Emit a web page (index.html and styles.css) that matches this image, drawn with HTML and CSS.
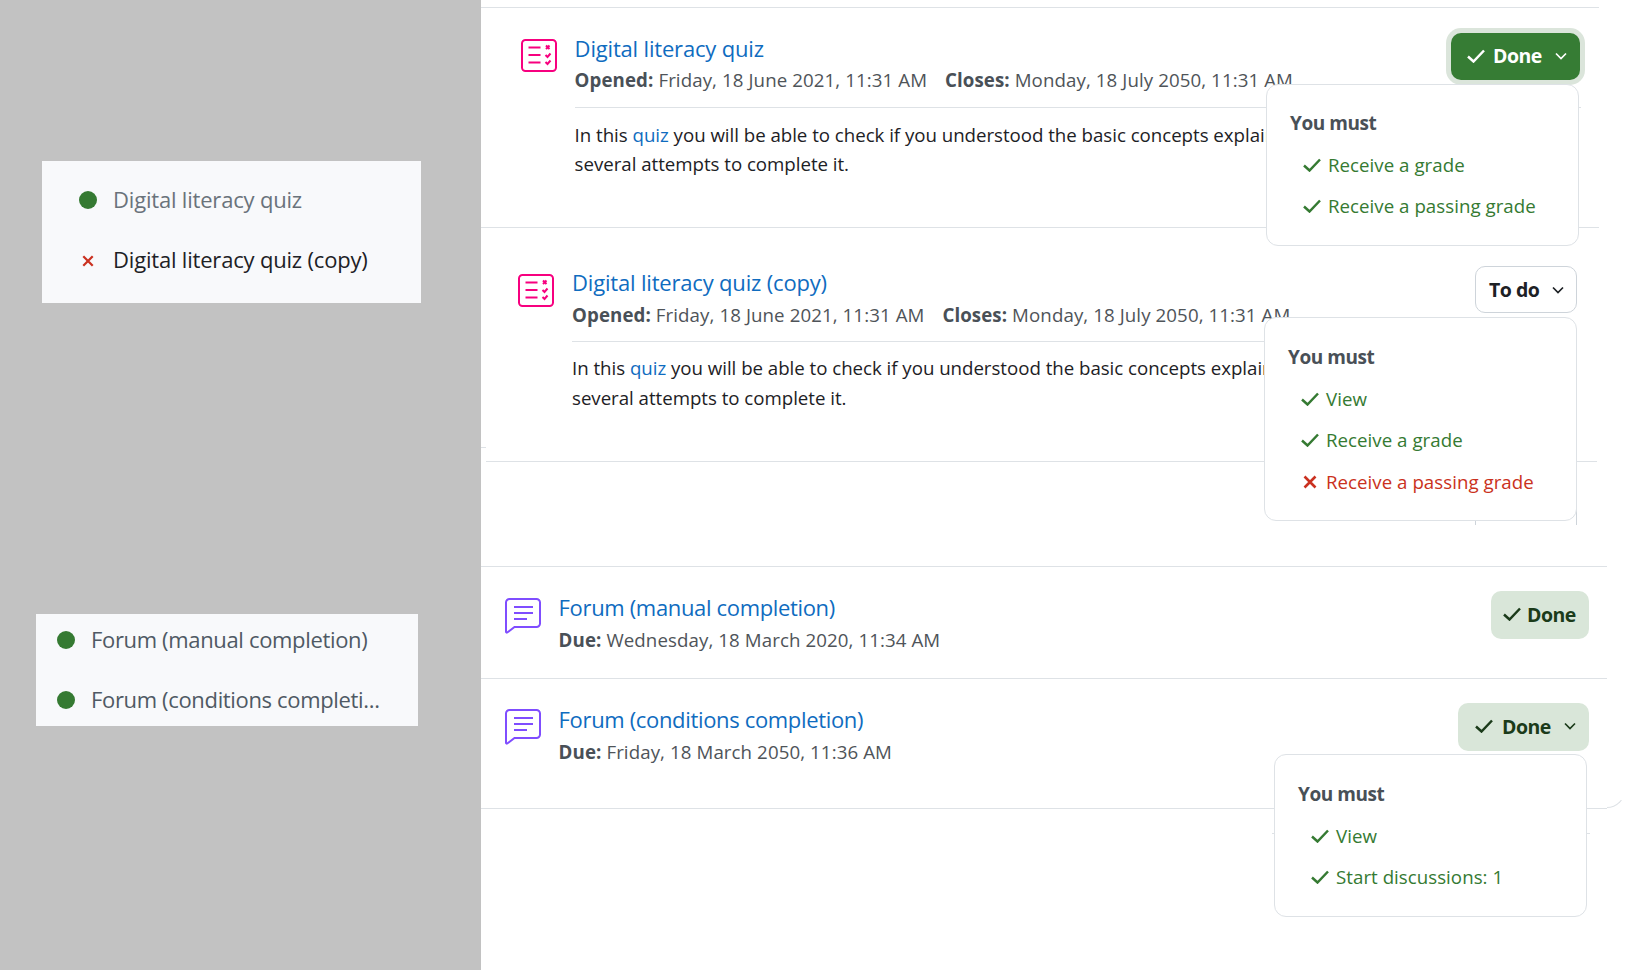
FILE: index.html
```html
<!DOCTYPE html>
<html lang="en">
<head>
<meta charset="utf-8">
<title>Activity completion</title>
<link rel="stylesheet" href="styles.css">
</head>
<body>
<svg class="defs" width="0" height="0" aria-hidden="true">
  <symbol id="i-quiz" viewBox="0 0 36 33">
    <rect x="1" y="1" width="34" height="31" rx="3.5" fill="none" stroke="#f7007f" stroke-width="2"/>
    <path d="M7.5 8.5h12M7.5 16h12M7.5 23.5h12" fill="none" stroke="#f7007f" stroke-width="2"/>
    <path d="M25 6.5l3.5 3.5M28.5 6.5L25 10M24.5 16l2 2 3-3.5M24.5 23l2 2 3-3.5" fill="none" stroke="#f7007f" stroke-width="2"/>
  </symbol>
  <symbol id="i-forum" viewBox="0 0 36 36">
    <path d="M1 4.500a3.500 3.500 0 0 1 3.500-3.500h27a3.500 3.500 0 0 1 3.500 3.500v21a3.500 3.500 0 0 1-3.500 3.500H9.500L2.200 34.500a.8.800 0 0 1-1.200-.7z" fill="none" stroke="#7f4dff" stroke-width="2"/>
    <path d="M9 9h19M9 15h19M9 21h13" fill="none" stroke="#7f4dff" stroke-width="2"/>
  </symbol>
  <symbol id="i-check" viewBox="0 0 18 14">
    <path d="M1 7.500l5.500 5L17 1.500" fill="none" stroke="currentColor" stroke-width="2.500"/>
  </symbol>
  <symbol id="i-cross" viewBox="0 0 14 14">
    <path d="M1.500 1.500l11 11M12.500 1.500l-11 11" fill="none" stroke="currentColor" stroke-width="2.600"/>
  </symbol>
  <symbol id="i-caret" viewBox="0 0 12 8">
    <path d="M1 1.500l5 5 5-5" fill="none" stroke="currentColor" stroke-width="1.700"/>
  </symbol>
</svg>

<div class="page">
  <aside class="side">
    <ul class="index index-quiz">
      <li class="index-row is-muted"><span class="dot"></span><span class="index-text">Digital literacy quiz</span></li>
      <li class="index-row is-dark"><span class="cross-slot"><svg class="cross-mini"><use href="#i-cross"/></svg></span><span class="index-text">Digital literacy quiz (copy)</span></li>
    </ul>
    <ul class="index index-forum">
      <li class="index-row is-slate"><span class="dot"></span><span class="index-text">Forum (manual completion)</span></li>
      <li class="index-row is-slate"><span class="dot"></span><span class="index-text">Forum (conditions completi...</span></li>
    </ul>
  </aside>

  <main class="content">
    <section class="activity a1">
      <svg class="icon"><use href="#i-quiz"/></svg>
      <div class="body">
        <a class="title">Digital literacy quiz</a>
        <p class="meta"><b>Opened:</b> Friday, 18 June 2021, 11:31 AM <b class="gap">Closes:</b> Monday, 18 July 2050, 11:31 AM</p>
        <hr class="rule">
        <p class="desc">In this <a>quiz</a> you will be able to check if you understood the basic concepts explained. You have<br>several attempts to complete it.</p>
      </div>
      <button class="btn btn-solid btn-focus"><svg class="ck"><use href="#i-check"/></svg>Done<svg class="caret"><use href="#i-caret"/></svg></button>
      <div class="pop">
        <h4>You must</h4>
        <div class="req ok"><svg class="ck"><use href="#i-check"/></svg>Receive a grade</div>
        <div class="req ok"><svg class="ck"><use href="#i-check"/></svg>Receive a passing grade</div>
      </div>
    </section>

    <section class="activity a2">
      <svg class="icon"><use href="#i-quiz"/></svg>
      <div class="body">
        <a class="title">Digital literacy quiz (copy)</a>
        <p class="meta"><b>Opened:</b> Friday, 18 June 2021, 11:31 AM <b class="gap">Closes:</b> Monday, 18 July 2050, 11:31 AM</p>
        <hr class="rule">
        <p class="desc">In this <a>quiz</a> you will be able to check if you understood the basic concepts explained. You have<br>several attempts to complete it.</p>
      </div>
      <span class="ghost"></span>
      <button class="btn btn-outline"><span>To do</span><svg class="caret"><use href="#i-caret"/></svg></button>
      <div class="pop">
        <h4>You must</h4>
        <div class="req ok"><svg class="ck"><use href="#i-check"/></svg>View</div>
        <div class="req ok"><svg class="ck"><use href="#i-check"/></svg>Receive a grade</div>
        <div class="req bad"><svg class="ck x"><use href="#i-cross"/></svg>Receive a passing grade</div>
      </div>
    </section>

    <section class="activity a3">
      <svg class="icon"><use href="#i-forum"/></svg>
      <div class="body">
        <a class="title">Forum (manual completion)</a>
        <p class="meta"><b>Due:</b> Wednesday, 18 March 2020, 11:34 AM</p>
      </div>
      <button class="btn btn-soft btn-plain"><svg class="ck"><use href="#i-check"/></svg>Done</button>
    </section>

    <section class="activity a4">
      <svg class="icon"><use href="#i-forum"/></svg>
      <div class="body">
        <a class="title">Forum (conditions completion)</a>
        <p class="meta"><b>Due:</b> Friday, 18 March 2050, 11:36 AM</p>
      </div>
      <button class="btn btn-soft"><svg class="ck"><use href="#i-check"/></svg>Done<svg class="caret"><use href="#i-caret"/></svg></button>
      <span class="corner"></span>
      <span class="stub"></span>
      <div class="pop">
        <h4>You must</h4>
        <div class="req ok"><svg class="ck"><use href="#i-check"/></svg>View</div>
        <div class="req ok"><svg class="ck"><use href="#i-check"/></svg>Start discussions: 1</div>
      </div>
    </section>
  </main>
</div>
</body>
</html>
```

FILE: styles.css
```css
* { box-sizing: border-box; }
html, body { margin: 0; padding: 0; height: 100%; }
body {
  background: #fff;
  color: #1d2125;
  font-family: "Open Sans", "Noto Sans", sans-serif;
  font-size: 18px;
  overflow: hidden;
}
.defs { position: absolute; }
.page { display: flex; height: 970px; }

/* Left panel with the course index fragments */
.side {
  width: 481px;
  flex: none;
  background: #c2c2c2;
  padding-top: 161px;
}
.index {
  list-style: none;
  margin: 0;
  background: #f8f9fb;
  font-size: 22px;
}
.index-quiz { width: 379px; height: 142px; margin-left: 42px; padding: 9px 0 0 37px; letter-spacing: -0.19px; }
.index-forum { width: 382px; height: 112px; margin: 311px 0 0 36px; padding: 0 0 0 21px; letter-spacing: -0.34px; display: flex; flex-direction: column; gap: 8px; }
.index-row { display: flex; align-items: center; height: 60px; }
.index-forum .index-row { height: 52px; }
.dot { width: 18px; height: 18px; border-radius: 50%; background: #357a32; flex: none; margin-right: 16px; }
.cross-slot { width: 18px; flex: none; margin-right: 16px; display: flex; justify-content: center; padding-top: 1px; }
.cross-mini { width: 12px; height: 12px; color: #ca3120; }
.is-muted { color: #6a737b; }
.is-dark { color: #1d2125; }
.is-slate { color: #4f5964; }
.index-text { white-space: nowrap; padding-bottom: 2px; }

/* Right panel */
.content { flex: 1; min-width: 0; padding-top: 7px; }
.activity { position: relative; }
.a1 { height: 221px; border-top: 1px solid #dee2e6; border-bottom: 1px solid #dee2e6; margin-right: 29px; padding: 25px 0 0 40px; display: flex; }
.a2 { height: 234px; margin: 0 31px 0 5px; border-bottom: 1px solid #dee2e6; padding: 39px 0 0 32px; display: flex; }
.a3 { margin-top: 104px; height: 113px; border-top: 1px solid #dee2e6; border-bottom: 1px solid #dee2e6; margin-right: 21px; padding: 25px 0 0 24px; display: flex; }
.a4 { height: 130px; border-bottom: 1px solid #dee2e6; margin-right: 21px; padding: 25px 0 0 24px; display: flex; }

.a2::before { content: ""; position: absolute; left: -5px; top: 219px; width: 5px; height: 1px; background: #dee2e6; }

.icon { width: 36px; height: 33px; flex: none; margin: 6px 17.600px 0 0; }
.a2 .icon { margin: 7px 18px 0 0; }
.a3 .icon { height: 36px; margin: 6px 17.600px 0 0; }
.a4 .icon { height: 36px; margin: 5px 17.600px 0 0; }
.body { flex: 1; min-width: 0; }
.title { display: block; color: #0f6cbf; font-size: 22px; line-height: 30px; letter-spacing: -0.18px; white-space: nowrap; }
.a3 .title, .a4 .title { letter-spacing: -0.34px; }
.meta { margin: 3px 0 0; color: #4f5459; font-size: 18.700px; line-height: 28px; letter-spacing: 0.09px; white-space: nowrap; }
.a2 .meta, .a3 .meta, .a4 .meta { margin-top: 4px; }
.meta b { font-weight: 700; color: #495057; }
.gap { margin-left: 13px; }
.rule { border: 0; border-top: 1px solid #dee2e6; margin: 13px 0 0; width: 1006px; }
.a2 .rule { margin-top: 12px; width: 1005px; }
.desc { margin: 12px 0 0; font-size: 18.700px; line-height: 29px; letter-spacing: -0.03px; white-space: nowrap; color: #1d2125; }
.a2 .desc { margin-top: 11px; line-height: 30px; }
.desc a { color: #0f6cbf; }

/* Buttons */
.btn {
  position: absolute;
  display: flex;
  align-items: center;
  height: 47px;
  border: 0;
  border-radius: 10px;
  font: 700 19.500px "Open Sans", "Noto Sans", sans-serif;
  letter-spacing: -0.5px;
  padding: 0 0 2px;
  white-space: nowrap;
}
.btn .ck { width: 18px; height: 14px; margin-right: 8px; flex: none; }
.btn .caret { width: 12px; height: 8px; margin-left: 13px; flex: none; }
.btn-solid { background: #367c34; color: #fff; }
.btn-soft { background: #d9e6d9; color: #1b3b1a; }
.btn-outline { background: #fff; border: 1px solid #ced4da; color: #1d2125; }
.btn-focus { box-shadow: 0 0 0 5px #dbe5db; }

.a1 .btn { left: 970px; top: 25px; width: 129px; padding-left: 16px; }
.a2 .btn { left: 989px; top: 38px; width: 102px; padding: 0 0 0 13px; }
.a3 .btn { left: 1010px; top: 24px; width: 98px; height: 48px; padding-left: 12px; }
.a3 .btn .ck { margin-right: 6px; }
.a4 .btn { left: 977px; top: 24px; width: 131px; height: 48px; padding-left: 17px; }
.a4 .btn .ck { margin-right: 9px; }

.pop {
  position: absolute;
  width: 313px;
  background: #fff;
  border: 1px solid #dee2e6;
  border-radius: 12px;
  padding: 23px 0 0 23px;
  color: #495057;
  z-index: 2;
}
.pop h4 { margin: 0 0 6px; font-size: 19px; line-height: 30px; font-weight: 700; letter-spacing: -0.45px; }
.a2 .pop, .a4 .pop { padding-top: 24px; }
.a2 .pop h4, .a4 .pop h4 { margin-bottom: 6px; }
.req { display: flex; align-items: center; height: 41px; margin-left: 13px; font-size: 18.700px; letter-spacing: 0.03px; white-space: nowrap; }
.req.bad { margin-top: 1px; }
.req .ck { width: 18px; height: 14px; flex: none; margin-right: 7px; }
.req .x { width: 14px; height: 14px; margin: 0 9px 0 2px; }
.ok { color: #357a32; }
.bad { color: #ca3120; }
.a1 .pop { left: 785px; top: 76px; height: 162px; }
.a2 .pop { left: 778px; top: 89px; height: 204px; }
.a4 .pop { left: 793px; top: 75px; height: 163px; }

/* Leftovers behind the popovers */
.ghost { position: absolute; left: 989px; top: 280px; width: 102px; height: 17px; border: 1px solid #ced4da; border-width: 0 1px; }
.corner { position: absolute; right: -18px; top: 111px; width: 18px; height: 18px; border-bottom: 1px solid #dee2e6; border-right: 1px solid #dee2e6; border-bottom-right-radius: 18px; clip-path: inset(10px 0 0 0); }
.stub { position: absolute; left: 791px; top: 154px; width: 318px; height: 1px; background: #dee2e6; }
```
